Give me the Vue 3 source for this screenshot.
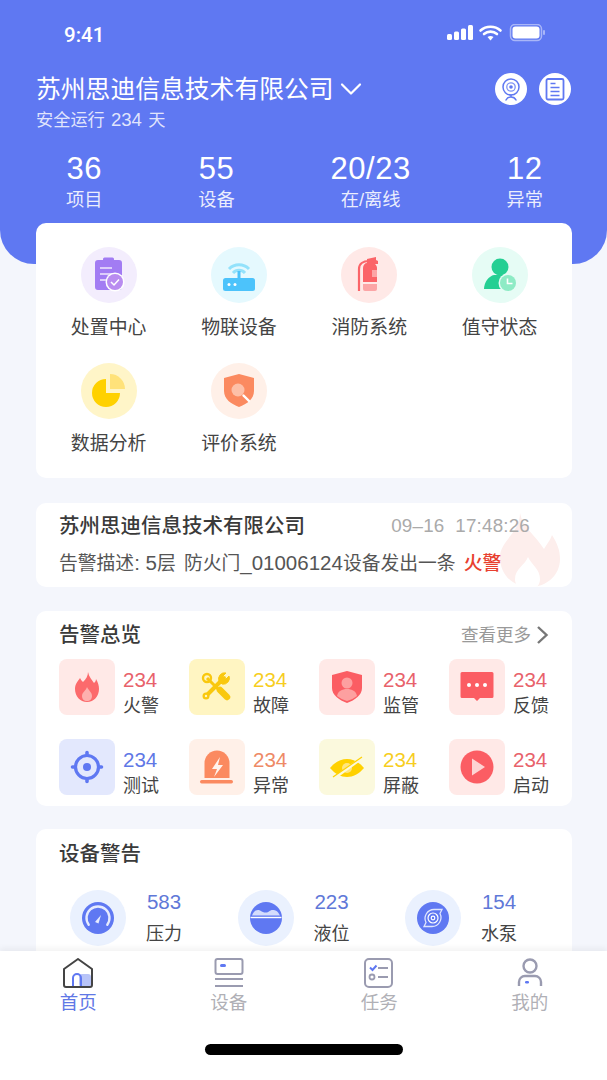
<template>
  <div class="phone">
    <div class="scroll">
      <header class="hero">
        <div class="status">
          <span class="clock">9:41</span>
          <svg class="status-icons" width="98" height="18" viewBox="0 0 98 18">
            <rect x="0" y="10" width="5" height="6" rx="1.5" fill="#fff" />
            <rect x="7" y="7.5" width="5" height="8.5" rx="1.5" fill="#fff" />
            <rect x="14" y="4.5" width="5" height="11.5" rx="1.5" fill="#fff" />
            <rect x="21" y="1" width="5" height="15" rx="1.5" fill="#fff" />
            <path d="M33.5 6.5a15 15 0 0 1 20 0M37 10a10 10 0 0 1 13 0" fill="none" stroke="#fff" stroke-width="2.6" stroke-linecap="round" />
            <path d="M40.500 13a5 5 0 0 1 6 0l-3 3.500z" fill="#fff" />
            <rect x="63.500" y="0.500" width="31" height="16" rx="4.500" fill="none" stroke="#a9b6f8" stroke-width="1.500" />
            <rect x="65.500" y="2.500" width="27" height="12" rx="3" fill="#fff" />
            <rect x="96" y="6" width="2" height="5" rx="1" fill="#a9b6f8" />
          </svg>
        </div>
        <div class="company">
          <h1>苏州思迪信息技术有限公司</h1>
          <svg class="chevron" width="22" height="14" viewBox="0 0 22 14">
            <path d="M2 2.500l9 9 9-9" fill="none" stroke="#fff" stroke-width="2.200" stroke-linecap="round" stroke-linejoin="round" />
          </svg>
          <div class="hero-actions">
            <span class="round-btn">
              <svg width="32" height="32" viewBox="0 0 32 32">
                <circle cx="16" cy="14" r="8" fill="none" stroke="#5f78f2" stroke-width="1.500" />
                <circle cx="16" cy="14" r="4.200" fill="none" stroke="#7f93f5" stroke-width="1.300" />
                <circle cx="16" cy="14" r="1.800" fill="#5f78f2" />
                <path d="M16 22v2M11 27c1-2 2.500-3 5-3s4 1 5 3" fill="none" stroke="#5f78f2" stroke-width="1.500" stroke-linecap="round" />
              </svg>
            </span>
            <span class="round-btn">
              <svg width="32" height="32" viewBox="0 0 32 32">
                <rect x="7.500" y="6" width="17" height="20.500" rx="1.500" fill="none" stroke="#5f78f2" stroke-width="1.800" />
                <path d="M11.500 10.500h5M11.500 14.500h9M11.500 18.500h9M11.500 22.500h9" stroke="#5f78f2" stroke-width="1.600" />
              </svg>
            </span>
          </div>
        </div>
        <p class="safe">安全运行<i> 234 </i>天</p>
        <div class="stats">
          <div v-for="stat in stats" :key="stat.label" class="stat">
            <strong>{{ stat.value }}</strong>
            <span>{{ stat.label }}</span>
          </div>
        </div>
      </header>

      <section class="card entry-card">
        <div v-for="entry in entries" :key="entry.label" class="entry">
          <svg class="entry-icon" width="56" height="56" viewBox="0 0 56 56" v-html="entry.icon"></svg>
          <span>{{ entry.label }}</span>
        </div>
      </section>

      <section class="card notice-card">
        <svg class="notice-flame" width="60" height="74" viewBox="0 0 60 74">
          <path d="M20 0c2 13 15 22 24 36 2-4 6-8 8-14 5 8 8 15 8 24 0 16-13 28-30 28S0 62 0 44C0 28 20 20 20 0z" fill="#fdeeec" />
          <path d="M28 44c3 7 12 12 12 22 0 4-2 8-4 8H20c-3 0-5-4-5-8 0-10 10-14 13-22z" fill="#fff" />
        </svg>
        <div class="notice-top">
          <strong>苏州思迪信息技术有限公司</strong>
          <time>09–16&nbsp;&nbsp;17:48:26</time>
        </div>
        <p class="notice-desc">告警描述<i>: 5</i>层<i class="gap">&nbsp;</i>防火门<i>_01006124</i>设备发出一条<i class="gap">&nbsp;</i><em>火警</em></p>
      </section>

      <section class="card overview-card">
        <div class="section-head">
          <h2>告警总览</h2>
          <span class="more">
            查看更多
            <svg width="13" height="20" viewBox="0 0 13 20">
              <path d="M2 2l8.500 8L2 18" fill="none" stroke="#777" stroke-width="2.400" />
            </svg>
          </span>
        </div>
        <div class="overview-grid">
          <div v-for="item in alarms" :key="item.label" class="alarm">
            <svg class="alarm-icon" :class="item.tone" width="56" height="56" viewBox="0 0 56 56" v-html="item.icon"></svg>
            <div class="alarm-copy">
              <b :class="item.tone">234</b>
              <span>{{ item.label }}</span>
            </div>
          </div>
        </div>
      </section>

      <section class="card device-card">
        <h2>设备警告</h2>
        <div class="device-row">
          <div v-for="device in devices" :key="device.label" class="device">
            <svg width="56" height="56" viewBox="0 0 56 56" v-html="device.icon"></svg>
            <div class="device-copy">
              <b>{{ device.value }}</b>
              <span>{{ device.label }}</span>
            </div>
          </div>
        </div>
      </section>
    </div>

    <nav class="tabbar">
      <div class="tabs">
        <div v-for="tab in tabs" :key="tab.label" class="tab" :class="{ active: tab.active }">
          <svg width="32" height="30" viewBox="0 0 32 30" v-html="tab.icon"></svg>
          <span>{{ tab.label }}</span>
        </div>
      </div>
      <div class="home-bar"></div>
    </nav>
  </div>
</template>

<script setup>
const stats = [
  { value: '36', label: '项目' },
  { value: '55', label: '设备' },
  { value: '20/23', label: '在/离线' },
  { value: '12', label: '异常' }
]

const entries = [
  {
    label: '处置中心',
    icon: `<circle cx="28" cy="28" r="28" fill="#f3edfd"/>
      <path d="M17 13h5v-1a1.500 1.500 0 0 1 1.500-1.500h8A1.500 1.500 0 0 1 33 12v1h5a3 3 0 0 1 3 3v24a3 3 0 0 1-3 3H17a3 3 0 0 1-3-3V16a3 3 0 0 1 3-3z" fill="#a27cf3"/>
      <path d="M19 21h12M19 27h14M19 33h8" stroke="#efe8fd" stroke-width="1.500"/>
      <circle cx="34" cy="35" r="9.500" fill="#fff"/><circle cx="34" cy="35" r="8" fill="#b98cf0"/>
      <path d="M30 35l3 3 5-5.500" fill="none" stroke="#fff" stroke-width="1.500"/>`
  },
  {
    label: '物联设备',
    icon: `<circle cx="28" cy="28" r="28" fill="#e5f9fe"/>
      <path d="M18 22a14 14 0 0 1 20 0M22 26a8 8 0 0 1 12 0" fill="none" stroke="#93e2fb" stroke-width="3"/>
      <path d="M28 24v9" stroke="#4cc3fb" stroke-width="3"/>
      <rect x="12" y="31" width="32" height="13" rx="2.500" fill="#4cc3fb"/>
      <circle cx="18" cy="37.500" r="1.500" fill="#fff"/><circle cx="24" cy="37.500" r="1.500" fill="#fff"/>`
  },
  {
    label: '消防系统',
    icon: `<circle cx="28" cy="28" r="28" fill="#ffe9e7"/>
      <path d="M18 44V22c0-5 4-8 10-8" fill="none" stroke="#fb6468" stroke-width="2.200"/>
      <path d="M26 12l9-2v3l2 1v3h-3c1 1 2 2 2 4v14H22V21c0-3 2-5 4-5z" fill="#fb6468"/>
      <rect x="31" y="23" width="5" height="7" fill="#fca5a6"/>
      <path d="M22 37h14v5a2 2 0 0 1-2 2H24a2 2 0 0 1-2-2z" fill="#fca5a6"/>`
  },
  {
    label: '值守状态',
    icon: `<circle cx="28" cy="28" r="28" fill="#e6fcf5"/>
      <circle cx="28" cy="20" r="8.500" fill="#25cf93"/>
      <path d="M12 42c0-7 5-13 10-14h10c3 1 4 3 4 5l-4 9z" fill="#25cf93"/>
      <circle cx="36" cy="36" r="9.500" fill="#e6fcf5"/><circle cx="36" cy="36" r="8" fill="#8eebc5"/>
      <path d="M35.500 31.500v5h5" fill="none" stroke="#fff" stroke-width="1.600"/>`
  },
  {
    label: '数据分析',
    icon: `<circle cx="28" cy="28" r="28" fill="#fff5c8"/>
      <path d="M26 15v14h14a14 14 0 1 1-14-14z" fill="#ffd100" transform="translate(-1 1)"/>
      <path d="M29 11a15 15 0 0 1 15 15H29z" fill="#ffe27a"/>`
  },
  {
    label: '评价系统',
    icon: `<circle cx="28" cy="28" r="28" fill="#fff0e8"/>
      <path d="M28 11l15 4v13c0 8-7 13-15 16-8-3-15-8-15-16V15z" fill="#fb8a60"/>
      <circle cx="27" cy="27" r="6.500" fill="#fdc0a8"/>
      <path d="M32.500 32.500L38 38" stroke="#fff" stroke-width="2.400" stroke-linecap="round"/>`
  }
]

const alarms = [
  {
    label: '火警',
    tone: 'red',
    icon: `<path d="M29 13c1 5 4 8 6 11 1-1 2-2 2-4 2 3 3 7 3 10 0 7-5 13-12 13s-12-6-12-13c0-5 3-8 5-11 1 2 2 3 3 4 3-3 5-6 5-10z" fill="#fc6a6c"/>
      <path d="M28 28c1 3 5 5 5 9 0 3-2 5-5 5s-5-2-5-5c0-4 4-5 5-9z" fill="#fdb0ae"/>`
  },
  {
    label: '故障',
    tone: 'yellow',
    icon: `<path d="M17 37l18-18" stroke="#f9c80e" stroke-width="4" stroke-linecap="round"/>
      <path d="M40 17l-4 4-3-3 4-4a6 6 0 0 0-7 8l3 3a6 6 0 0 0 7-8z" fill="#f9c80e" stroke="#f9c80e"/>
      <circle cx="17" cy="37" r="3.500" fill="#f9c80e"/><circle cx="17" cy="37" r="1.200" fill="#fff5c2"/>
      <path d="M18 19l14 14" stroke="#f9c80e" stroke-width="3"/>
      <circle cx="18" cy="19" r="4" fill="none" stroke="#f9c80e" stroke-width="2.400"/>
      <path d="M31 31l7 7" stroke="#f9c80e" stroke-width="6.500" stroke-linecap="round"/>`
  },
  {
    label: '监管',
    tone: 'red',
    icon: `<path d="M28 12l15 4v13c0 7-7 12-15 15-8-3-15-8-15-15V16z" fill="#fb5d63"/>
      <circle cx="28" cy="24" r="5.500" fill="#fda0a0"/>
      <path d="M18 37c1-5 5-7 10-7s9 2 10 7c-3 2-6 4-10 5-4-1-7-3-10-5z" fill="#fda0a0"/>`
  },
  {
    label: '反馈',
    tone: 'red',
    icon: `<path d="M13 13h30a1.500 1.500 0 0 1 1.500 1.500v23a1.500 1.500 0 0 1-1.500 1.500H31l-3 3-3-3H13a1.500 1.500 0 0 1-1.500-1.500v-23A1.500 1.500 0 0 1 13 13z" fill="#fb5d63"/>
      <circle cx="20" cy="26" r="2" fill="#fff"/><circle cx="28" cy="26" r="2" fill="#fff"/><circle cx="36" cy="26" r="2" fill="#fff"/>`
  },
  {
    label: '测试',
    tone: 'blue',
    icon: `<circle cx="28" cy="28" r="11.500" fill="none" stroke="#5f78f2" stroke-width="3.200"/>
      <circle cx="28" cy="28" r="4" fill="#5f78f2"/>
      <path d="M28 15v-1.500M28 41v1.500M15 28h-1.500M41 28h1.500" stroke="#5f78f2" stroke-width="3.600" stroke-linecap="round"/>`
  },
  {
    label: '异常',
    tone: 'orange',
    icon: `<path d="M15.500 39V24a12.500 12.500 0 0 1 25 0v15z" fill="#fb8a60"/>
      <rect x="11" y="41" width="33" height="3.500" rx="1.700" fill="#fb8a60"/>
      <path d="M31 18l-8 12h5l-3 8 9-12h-5z" fill="#fff3ec"/>`
  },
  {
    label: '屏蔽',
    tone: 'yellow',
    icon: `<path d="M11 29c5-6 11-9 17-9s12 3 17 9c-5 6-11 9-17 9s-12-3-17-9z" fill="#ffd100"/>
      <circle cx="28" cy="29" r="5" fill="#ffe680"/>
      <path d="M14 40l29-21" stroke="#fbf9dd" stroke-width="3"/>
      <path d="M14 38l29-20" stroke="#ffd100" stroke-width="1.200"/>`
  },
  {
    label: '启动',
    tone: 'red',
    icon: `<circle cx="28" cy="28" r="16.500" fill="#fb5d63"/>
      <path d="M23 19.500l13 8.500-13 8.500z" fill="#fdd4d3"/>`
  }
]

const devices = [
  {
    label: '压力',
    value: 583,
    icon: `<circle cx="28" cy="28" r="28" fill="#eaf1fe"/><circle cx="28" cy="28" r="16" fill="#5f78f2"/>
      <path d="M18.700 34.700A11.500 11.500 0 1 1 37.300 34.700" fill="none" stroke="#e6ebfe" stroke-width="2.400" stroke-linecap="round"/>
      <path d="M25 32l6-7-2.500 8.500z" fill="#e6ebfe"/>`
  },
  {
    label: '液位',
    value: 223,
    icon: `<circle cx="28" cy="28" r="28" fill="#eaf1fe"/><circle cx="28" cy="28" r="16" fill="#5f78f2"/>
      <path d="M14 25.500c1-3 3-5.500 6-5.500s3.500 2.500 7.500 2.500 4-3 8-2.500 5 3 6.500 5.500z" fill="#d4dcfc"/>
      <path d="M12.500 27.500h31" stroke="#fff" stroke-width="1.400"/>`
  },
  {
    label: '水泵',
    value: 154,
    icon: `<circle cx="28" cy="28" r="28" fill="#eaf1fe"/><circle cx="28" cy="28" r="16" fill="#5f78f2"/>
      <circle cx="28" cy="28" r="1.800" fill="none" stroke="#fff" stroke-width="1.200"/>
      <circle cx="28" cy="28" r="5" fill="none" stroke="#fff" stroke-width="1.200"/>
      <path d="M37 19.500H29a9 9 0 0 0-8 13l-2 4h8a9 9 0 0 0 8-13z" fill="none" stroke="#dfe5fd" stroke-width="1.300"/>`
  }
]

const tabs = [
  {
    label: '首页',
    active: true,
    icon: `<rect x="17" y="16" width="12" height="13" rx="3" fill="#b8c4f8"/>
      <path d="M11 28v-8a4 4 0 0 1 8 0v8" fill="none" stroke="#5f78f2" stroke-width="2"/>
      <path d="M16 1L2 11v16a2 2 0 0 0 2 2h24a2 2 0 0 0 2-2V11z" fill="none" stroke="#444" stroke-width="2" stroke-linejoin="round"/>`
  },
  {
    label: '设备',
    icon: `<rect x="2.500" y="1" width="27" height="15" rx="2" fill="none" stroke="#9a9bb0" stroke-width="2"/>
      <rect x="7" y="6" width="6" height="3" rx="1.500" fill="#5f78f2"/>
      <path d="M2 21h28M2 28h28" stroke="#9a9bb0" stroke-width="2"/>`
  },
  {
    label: '任务',
    icon: `<rect x="2" y="1" width="27" height="28" rx="4" fill="none" stroke="#9a9bb0" stroke-width="2"/>
      <path d="M7 9.500l2.500 2.500 4-4.500" fill="none" stroke="#5f78f2" stroke-width="2"/>
      <path d="M15 10h10M15 19h10" stroke="#9a9bb0" stroke-width="2"/>
      <circle cx="9" cy="19" r="2.500" fill="none" stroke="#9a9bb0" stroke-width="1.800"/>`
  },
  {
    label: '我的',
    icon: `<circle cx="16" cy="8" r="6.500" fill="none" stroke="#9a9bb0" stroke-width="2.400"/>
      <path d="M5 28v-4a6 6 0 0 1 6-6h10a6 6 0 0 1 6 6v4" fill="none" stroke="#9a9bb0" stroke-width="2.400"/>
      <rect x="11" y="23" width="4" height="2.500" rx="1.200" fill="#5f78f2"/>`
  }
]
</script>

<style>
html,
body {
  margin: 0;
  background: #f4f6fc;
}
</style>

<style scoped>
.phone {
  display: flex;
  flex-direction: column;
  width: 607px;
  height: 1080px;
  overflow: hidden;
  background: #f4f6fc;
  font-family: "Liberation Sans", "Noto Sans CJK SC", sans-serif;
  color: #333;
}

.scroll {
  flex: 1;
  min-height: 0;
  overflow: hidden;
}

i {
  font-style: normal;
}

.hero {
  height: 264px;
  box-sizing: border-box;
  padding: 20px 36px 0;
  border-radius: 0 0 34px 34px;
  background: #5f78f2;
  color: #fff;
}

.status {
  display: flex;
  justify-content: space-between;
  align-items: center;
  height: 30px;
  padding: 0 26px 0 28px;
}

.clock {
  font-family: Roboto, sans-serif;
  font-size: 20.500px;
  font-weight: 500;
}

.status-icons {
  margin-top: -4px;
}

.company {
  display: flex;
  align-items: center;
  margin-top: 23px;
  height: 32px;
}

.company h1 {
  margin: 0;
  padding-top: 1px;
  font-size: 24.800px;
  font-weight: 400;
  line-height: 31px;
  white-space: nowrap;
}

.chevron {
  margin-left: 6px;
}

.hero-actions {
  display: flex;
  gap: 12px;
  margin-left: auto;
}

.round-btn {
  display: block;
  width: 32px;
  height: 32px;
  border-radius: 50%;
  background: #fff;
}

.safe {
  margin: 3px 0 0;
  font-size: 17.200px;
  line-height: 24px;
  color: rgba(255, 255, 255, 0.82);
}

.safe i {
  font-size: 18.600px;
  word-spacing: 1px;
}

.stats {
  display: flex;
  justify-content: space-between;
  margin-top: 19px;
  padding: 0 28px 0 30px;
}

.stat {
  display: flex;
  flex-direction: column;
  align-items: center;
}

.stat strong {
  font-size: 31px;
  font-weight: 400;
  line-height: 36px;
  letter-spacing: 0.5px;
}

.stat span {
  font-size: 18.300px;
  line-height: 26px;
  color: rgba(255, 255, 255, 0.88);
}

.card {
  position: relative;
  width: 536px;
  margin-left: 36px;
  border-radius: 10px;
  background: #fff;
}

.entry-card {
  display: grid;
  grid-template-columns: repeat(4, 130.300px);
  row-gap: 21px;
  box-sizing: border-box;
  height: 255px;
  margin-top: -41px;
  padding: 24px 7px 21px 7.500px;
}

.entry {
  display: flex;
  flex-direction: column;
  align-items: center;
  gap: 11px;
}

.entry span {
  font-size: 18.900px;
  line-height: 28px;
  color: #444;
}

.notice-card {
  box-sizing: border-box;
  height: 84px;
  margin-top: 25px;
  padding: 9px 42px 0 23px;
  overflow: hidden;
}

.notice-flame {
  position: absolute;
  right: 12px;
  top: 10px;
}

.notice-top {
  position: relative;
  display: flex;
  justify-content: space-between;
  line-height: 28px;
}

.notice-top strong {
  font-size: 20.500px;
  font-weight: 500;
  color: #3a3a3a;
}

.notice-top time {
  font-size: 18.800px;
  letter-spacing: 0.2px;
  color: #aaa;
}

.notice-desc {
  position: relative;
  margin: 9px 0 0;
  font-size: 18.800px;
  line-height: 28px;
  white-space: nowrap;
  color: #555;
}

.notice-desc i {
  font-size: 20.500px;
}

.notice-desc .gap {
  padding-right: 2.500px;
}

.notice-desc em {
  font-style: normal;
  font-weight: 500;
  color: #e8402f;
}

.overview-card {
  box-sizing: border-box;
  height: 195px;
  margin-top: 24px;
  padding: 10px 23px 11px;
}

.section-head {
  display: flex;
  justify-content: space-between;
  align-items: center;
}

h2 {
  margin: 0;
  font-size: 20.500px;
  font-weight: 500;
  line-height: 28px;
  color: #3a3a3a;
}

.more {
  display: flex;
  align-items: center;
  gap: 5px;
  font-size: 17.500px;
  line-height: 26px;
  color: #999;
}

.overview-grid {
  display: grid;
  grid-template-columns: repeat(4, 130px);
  row-gap: 24px;
  margin-top: 10px;
}

.alarm {
  display: flex;
  gap: 8px;
  height: 56px;
}

.alarm-icon {
  border-radius: 8px;
}

.alarm-icon.red {
  background: #ffe9e7;
}

.alarm-icon.yellow {
  background: #fff5c2;
}

.alarm:nth-child(7) .alarm-icon {
  background: #fbf9dd;
}

.alarm-icon.blue {
  background: #e3e8fd;
}

.alarm-icon.orange {
  background: #fff0e8;
}

.alarm-copy {
  display: flex;
  flex-direction: column;
  padding-top: 11px;
}

.alarm-copy b {
  font-size: 20.500px;
  font-weight: 400;
  line-height: 20px;
}

b.red {
  color: #e8626b;
}

b.yellow {
  color: #f7ce1f;
}

b.blue {
  color: #5f78e6;
}

b.orange {
  color: #ee8a66;
}

.alarm-copy span {
  margin-top: 6px;
  font-size: 18px;
  line-height: 20px;
  color: #444;
}

.device-card {
  box-sizing: border-box;
  height: 160px;
  margin-top: 23px;
  padding: 11px 23px 0;
}

.device-row {
  display: grid;
  grid-template-columns: repeat(3, 167.500px);
  margin: 22px 0 0 11px;
}

.device {
  display: flex;
  gap: 20px;
}

.device-copy {
  display: flex;
  flex-direction: column;
  align-items: center;
}

.device-copy b {
  font-size: 20.500px;
  font-weight: 400;
  line-height: 24px;
  color: #5f78d8;
}

.device-copy span {
  margin-top: 6px;
  font-size: 18px;
  line-height: 28px;
  color: #444;
}

.tabbar {
  position: relative;
  flex: none;
  box-sizing: border-box;
  height: 129px;
  padding-top: 7px;
  background: #fff;
  box-shadow: 0 -3px 6px rgba(0, 0, 0, 0.05);
}

.tabs {
  display: grid;
  grid-template-columns: repeat(4, 150.500px);
  padding-left: 3px;
}

.tab {
  display: flex;
  flex-direction: column;
  align-items: center;
  gap: 2px;
}

.tab span {
  font-size: 18.500px;
  line-height: 26px;
  color: #b0b0b6;
}

.tab.active span {
  color: #5f78e6;
}

.home-bar {
  width: 198px;
  height: 11px;
  margin: 28px auto 0;
  border-radius: 6px;
  background: #000;
}
</style>
